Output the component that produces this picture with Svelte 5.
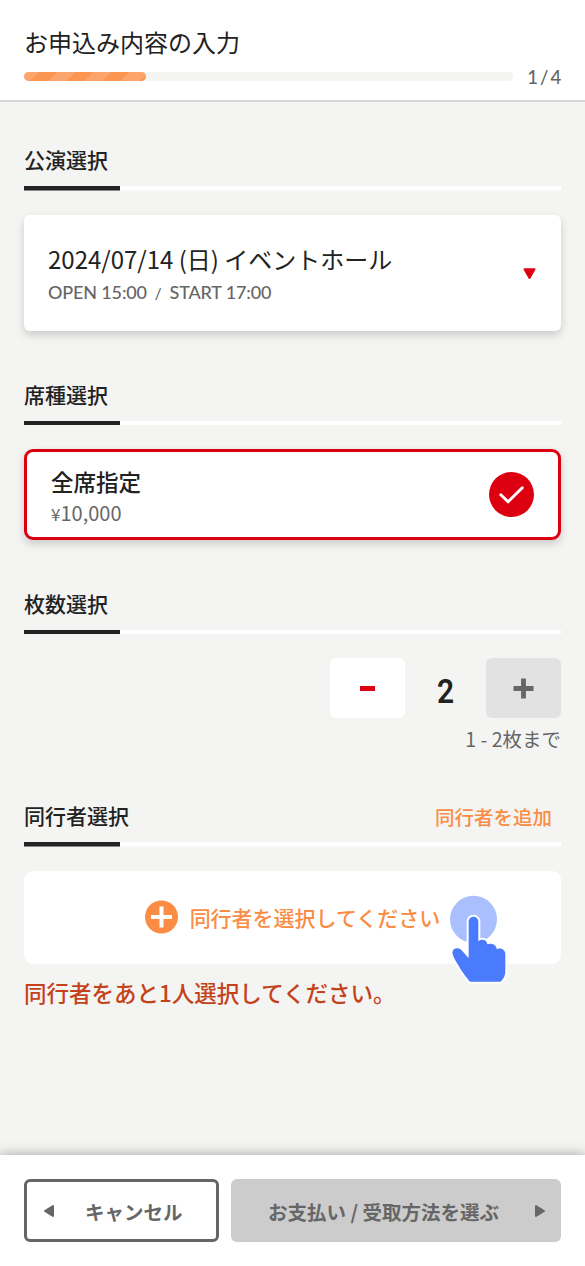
<script>
	let step = 1;
	let totalSteps = 4;
	let count = 2;
	let maxCount = 2;

	const decrement = () => {
		if (count > 1) count--;
	};
	const increment = () => {
		if (count < maxCount) count++;
	};
</script>

<div class="page">
	<header>
		<h1>お申込み内容の入力</h1>
		<div class="progress">
			<div class="track">
				<div class="bar" style="width: {(step / totalSteps) * 100}%"></div>
			</div>
			<span class="steps">{step} / {totalSteps}</span>
		</div>
	</header>

	<main>
		<section>
			<div class="head"><h2>公演選択</h2></div>
			<div class="card event">
				<div>
					<div class="date">2024/07/14 (日) イベントホール</div>
					<div class="time"><span>OPEN 15:00</span><i>/</i><span>START 17:00</span></div>
				</div>
				<svg class="caret" width="14" height="12" viewBox="0 0 14 12">
					<path d="M1.5 1.3H11.5L6.5 10Z" fill="#dd0011" stroke="#dd0011" stroke-width="2" stroke-linejoin="round" />
				</svg>
			</div>
		</section>

		<section>
			<div class="head"><h2>席種選択</h2></div>
			<div class="card seat">
				<div>
					<div class="seat-name">全席指定</div>
					<div class="price"><small>¥</small>10,000</div>
				</div>
				<svg width="45" height="46" viewBox="0 0 45 46">
					<circle cx="22.5" cy="23.5" r="22.5" fill="#dd0011" />
					<path d="M11.8 23.7L19.1 30.7L33.3 16.8" fill="none" stroke="#fff" stroke-width="2.9" stroke-linecap="round" />
				</svg>
			</div>
		</section>

		<section class="quantity">
			<div class="head"><h2>枚数選択</h2></div>
			<div class="counter">
				<button class="minus" aria-label="減らす" on:click={decrement}>
					<svg width="19" height="20" viewBox="0 0 19 20"><path d="M2 10.5H17" stroke="#dd0011" stroke-width="5" /></svg>
				</button>
				<span class="count">{count}</span>
				<button class="plus" aria-label="増やす" on:click={increment}>
					<svg width="21" height="21" viewBox="0 0 21 21"><path d="M.5 10.5H20.5M10.5 .5V20.5" stroke="#666" stroke-width="4.8" /></svg>
				</button>
			</div>
			<div class="limit">1 - {maxCount}枚まで</div>
		</section>

		<section>
			<div class="head">
				<h2>同行者選択</h2>
				<button class="link">同行者を追加</button>
			</div>
			<div class="card companion">
				<svg width="34" height="34" viewBox="0 0 34 34">
					<circle cx="16.5" cy="17" r="16.5" fill="#fb8c44" />
					<path d="M6 17H27M16.5 6.5V27.5" stroke="#fff" stroke-width="4" />
				</svg>
				<span>同行者を選択してください</span>
				<!-- tap hint -->
				<svg class="tap" width="100" height="110" viewBox="0 0 300 330">
					<circle cx="130.5" cy="118" r="70.5" fill="#aabffd" />
					<path
						d="M116 234V125C116 105 145 105 145 125V184C151 176 171 177 172 193C181 188 199 192 200 207C211 202 226 208 226 222V273C226 286 222 295 212 305H120C111 297 77 248 69 226C62 207 80 200 92 208Z"
						fill="#4a7bfd" stroke="#fff" stroke-width="12" stroke-linejoin="round" paint-order="stroke"
					/>
				</svg>
			</div>
			<p class="error">同行者をあと1人選択してください。</p>
		</section>
	</main>

	<footer>
		<button class="cancel">
			<svg width="12" height="14" viewBox="0 0 12 14"><path d="M10 2V12L2 7Z" fill="#666" stroke="#666" stroke-width="2" stroke-linejoin="round" /></svg>
			<span>キャンセル</span>
		</button>
		<button class="next">
			<span>お支払い / 受取方法を選ぶ</span>
			<svg width="12" height="14" viewBox="0 0 12 14"><path d="M2 2V12L10 7Z" fill="#666" stroke="#666" stroke-width="2" stroke-linejoin="round" /></svg>
		</button>
	</footer>
</div>

<style>
	:global(body) {
		margin: 0;
		background: #f4f4f2;
	}
	.page {
		height: 1266px;
		display: flex;
		flex-direction: column;
		overflow: hidden;
		color: #222;
		background: #f4f4f2;
		font-family: "Noto Sans CJK JP", sans-serif;
	}
	.page * {
		box-sizing: border-box;
	}
	header {
		height: 102px;
		padding: 24px 24px 0;
		background: #fff;
		border-bottom: 2px solid #d9d9d8;
	}
	h1 {
		margin: 0;
		font-size: 24px;
		line-height: 36px;
		font-weight: 400;
	}
	.progress {
		display: flex;
		align-items: center;
		justify-content: space-between;
		height: 33px;
	}
	.track {
		width: 489px;
		height: 9px;
		border-radius: 5px;
		background: #f4f4f2;
	}
	.bar {
		height: 9px;
		border-radius: 5px;
		background: repeating-linear-gradient(135deg, #fba56c 0 10.7px, #fa9552 10.7px 23.5px, #fba56c 23.5px 25.7px);
	}
	.steps {
		font: 500 18.5px/24px Lato, sans-serif;
		letter-spacing: -0.3px;
		word-spacing: -2px;
		color: #666;
		white-space: nowrap;
	}
	main {
		flex: 1;
		padding: 42px 24px 0;
	}
	section {
		margin-bottom: 48px;
	}
	.head {
		display: flex;
		justify-content: space-between;
		height: 46.5px;
		margin-bottom: 24px;
		background: linear-gradient(to right, #222 96px, #fff 96px) bottom / 100% 4.5px no-repeat;
	}
	h2 {
		margin: -1px 0 0;
		font-size: 21px;
		line-height: 32px;
		font-weight: 500;
	}
	button {
		font-family: inherit;
		border: 0;
		padding: 0;
		cursor: pointer;
	}
	.link {
		height: 33px;
		margin-right: 9px;
		background: none;
		color: #fb8c44;
		font-size: 19.5px;
		font-weight: 500;
	}
	.card {
		display: flex;
		align-items: center;
		justify-content: space-between;
		background: #fff;
		border-radius: 6px;
		box-shadow: 0 4px 9px rgba(0, 0, 0, 0.17);
	}
	.event {
		height: 116px;
		padding: 0 24px;
	}
	.date {
		padding-top: 3px;
		font-size: 24px;
		line-height: 36px;
	}
	.time {
		font: 500 18px/30px Lato, sans-serif;
		letter-spacing: -0.15px;
		color: #666;
		white-space: nowrap;
	}
	.time i {
		font-style: normal;
		font-size: 15px;
		margin: 0 8px;
	}
	.caret {
		margin-top: 2px;
	}
	.seat {
		height: 90.5px;
		padding: 0 24px;
		border: 3px solid #dd0011;
		border-radius: 9px;
	}
	.seat-name {
		padding-top: 5px;
		font-size: 22.5px;
		line-height: 32px;
		font-weight: 500;
	}
	.price {
		font-size: 20px;
		line-height: 31px;
		color: #666;
	}
	.price small {
		font-size: 17px;
	}
	.quantity {
		margin-bottom: 46.25px;
	}
	.counter {
		display: flex;
		justify-content: flex-end;
	}
	.counter button {
		display: flex;
		align-items: center;
		justify-content: center;
		width: 75px;
		height: 60px;
		border-radius: 6px;
	}
	.minus {
		background: #fff;
	}
	.plus {
		background: #e2e2e2;
	}
	.count {
		width: 81px;
		text-align: center;
		font: 600 34px/66px Roboto, sans-serif;
		height: 60px;
		transform: scaleX(0.88);
	}
	.limit {
		height: 36px;
		padding-top: 5px;
		text-align: right;
		font-size: 19.5px;
		line-height: 32px;
		color: #666;
	}
	.companion {
		position: relative;
		justify-content: center;
		height: 93px;
		gap: 11px;
		border-radius: 9px;
		box-shadow: none;
		color: #fb8c44;
		font-size: 21px;
		font-weight: 500;
	}
	.tap {
		position: absolute;
		left: 406px;
		top: 9px;
	}
	.error {
		margin: 10.5px 0 0;
		font-size: 22.5px;
		line-height: 36px;
		font-weight: 500;
		color: #c4421a;
	}
	footer {
		display: flex;
		gap: 12px;
		height: 111px;
		padding: 24px;
		background: #fff;
		box-shadow: 0 0 12px rgba(0, 0, 0, 0.35);
	}
	footer button {
		display: flex;
		align-items: center;
		height: 63px;
		border-radius: 6px;
		color: #666;
		font-size: 19.5px;
		font-weight: 700;
	}
	footer span {
		padding-top: 2px;
	}
	.cancel {
		width: 195px;
		padding-left: 16px;
		gap: 30px;
		border: 3px solid #666;
		background: #fff;
	}
	.next {
		width: 330px;
		padding: 0 15px 0 37px;
		justify-content: space-between;
		background: #ccc;
	}
</style>
